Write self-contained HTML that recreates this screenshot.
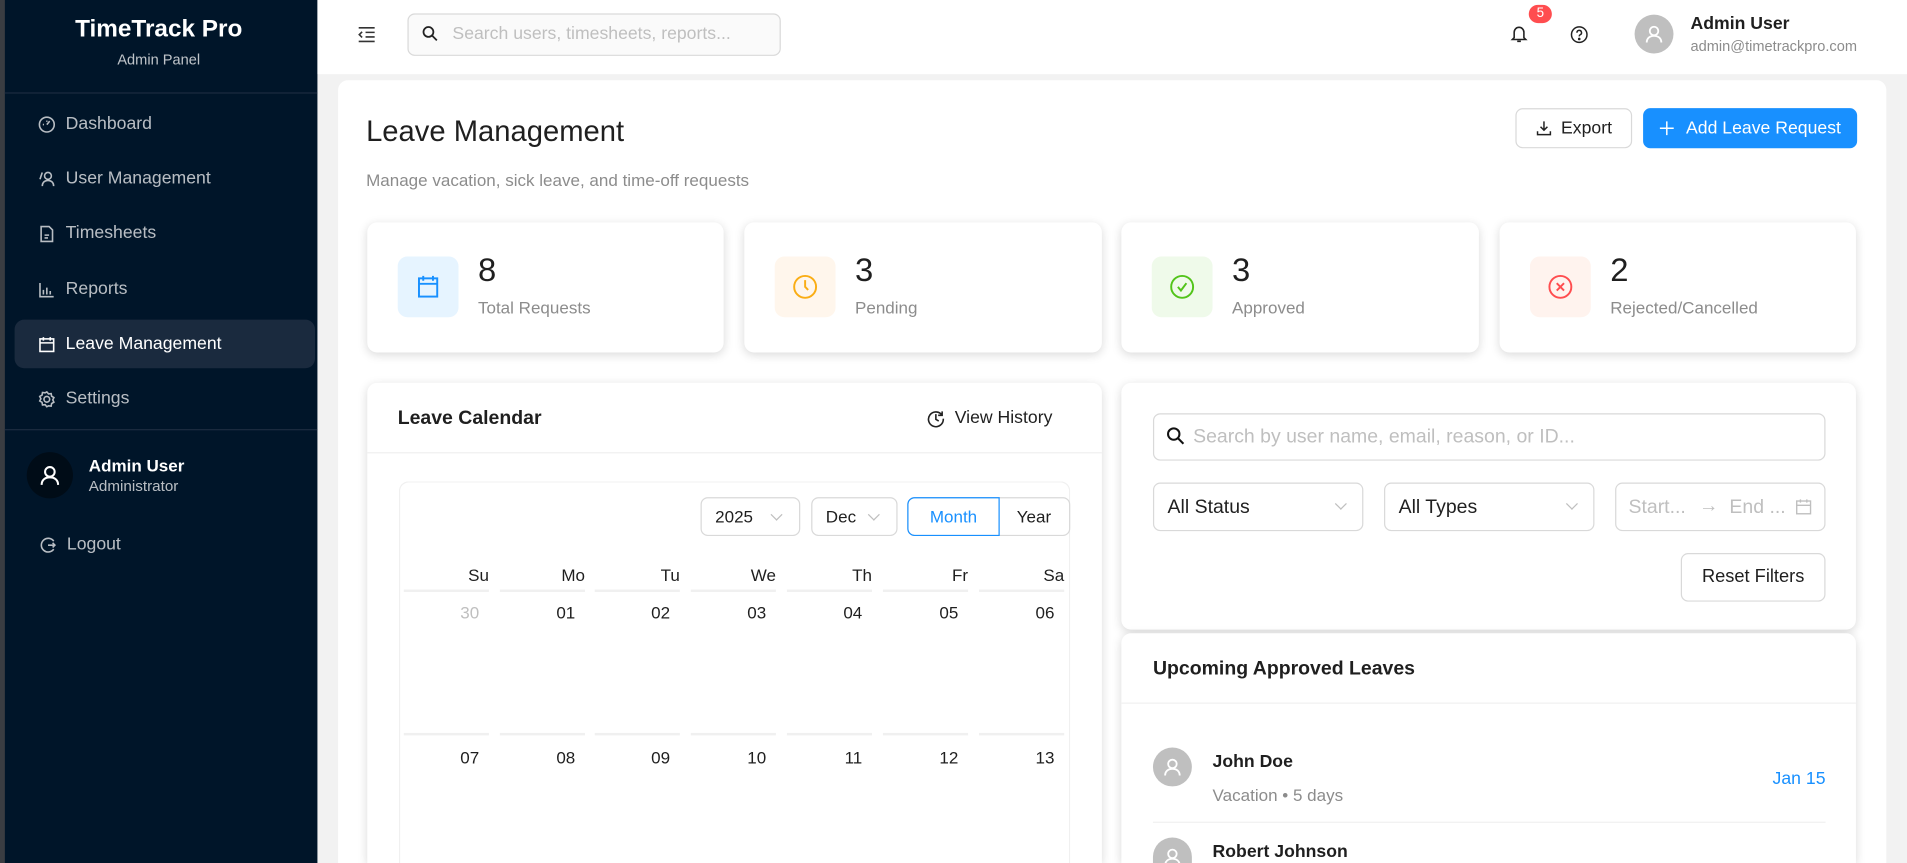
<!DOCTYPE html>
<html><head><meta charset="utf-8"><style>
*{box-sizing:border-box;margin:0;padding:0}
html,body{width:1907px;height:863px;overflow:hidden;background:#f2f2f2;font-family:"Liberation Sans",sans-serif}
#clip{position:absolute;left:0;top:0;width:1907px;height:863px;overflow:hidden}
#w{position:absolute;left:0;top:0;width:1568px;height:710px;overflow:hidden;transform:scale(1.2162,1.2155);transform-origin:0 0;background:#f2f2f2;color:#1f1f1f}
.a{position:absolute}
.sb{left:0;top:0;width:261px;height:710px;background:#001529;border-left:4px solid #3a3d42}
.sb .t{color:#fff}
.mi{position:absolute;left:27px;color:rgba(255,255,255,.72);font-size:14.5px;display:flex;align-items:center;gap:8px}
.mi svg{width:15px;height:15px;stroke:currentColor;fill:none;stroke-width:1.4}
.card{position:absolute;background:#fff;border-radius:8px;box-shadow:0 2px 8px rgba(0,0,0,.15)}
.cardb{position:absolute;background:#fff;border-radius:8px 8px 0 0;box-shadow:0 2px 8px rgba(0,0,0,.15)}
.box{position:absolute;border:1px solid #d9d9d9;border-radius:6px;background:#fff}
.ib{position:absolute;left:25px;top:28px;width:50px;height:50px;border-radius:8px;display:flex;align-items:center;justify-content:center}
.num{position:absolute;left:91px;top:24px;font-size:27px;color:#1f1f1f}
.lab{position:absolute;left:91px;top:62px;font-size:14px;color:#8c8c8c}
.wd,.dt{position:absolute;width:70px;text-align:right;font-size:14px}
.ln{position:absolute;width:70px;height:2px;background:#f0f0f0}
.chev{position:absolute;width:7px;height:7px;border-right:1px solid #bfbfbf;border-bottom:1px solid #bfbfbf;transform:rotate(45deg)}
</style></head><body><div id="clip"><div id="w">
<div class="a sb">
 <div class="a t" style="left:-4px;width:261px;top:13px;text-align:center;font-size:20px;font-weight:bold">TimeTrack Pro</div>
 <div class="a" style="left:-4px;width:261px;top:42px;text-align:center;font-size:12px;color:rgba(255,255,255,.75)">Admin Panel</div>
 <div class="a" style="left:0;width:257px;top:76px;height:1px;background:#1c2c40"></div>
 <div class="a" style="left:8px;top:263px;width:247px;height:40px;border-radius:8px;background:#1a2a3e"></div>
 <div class="mi" style="top:94px"><svg viewBox="0 0 16 16"><circle cx="8" cy="8" r="6.5"/><path d="M8 8l2.5-3M4.5 8h1M8 4.5v1"/></svg>Dashboard</div>
 <div class="mi" style="top:139px"><svg viewBox="0 0 16 16"><circle cx="9" cy="5" r="3"/><path d="M4 14c0-3 2-5 5-5s5 2 5 5M4 2L2 8"/></svg>User Management</div>
 <div class="mi" style="top:184px"><svg viewBox="0 0 16 16"><path d="M3 1.5h7l3 3v10H3z M6 9h4M6 11.5h3"/></svg>Timesheets</div>
 <div class="mi" style="top:230px"><svg viewBox="0 0 16 16"><path d="M2 2v12h12M5 12V8M8 12V6M11 12V9"/></svg>Reports</div>
 <div class="mi" style="top:275px;color:#fff"><svg viewBox="0 0 16 16"><rect x="2" y="3" width="12" height="11"/><path d="M2 6.5h12M5 1.5v3M11 1.5v3"/></svg>Leave Management</div>
 <div class="mi" style="top:320px"><svg viewBox="0 0 16 16"><circle cx="8" cy="8" r="2.5"/><path d="M8 1.5l1.5 1.8 2.3-.3.4 2.3 2 1.2-1 2 1 2-2 1.2-.4 2.3-2.3-.3L8 14.5l-1.5-1.8-2.3.3-.4-2.3-2-1.2 1-2-1-2 2-1.2.4-2.3 2.3.3z"/></svg>Settings</div>
 <div class="a" style="left:0;width:257px;top:353px;height:1px;background:#1c2c40"></div>
 <div class="a" style="left:18px;top:372px;width:38px;height:38px;border-radius:50%;background:#000c17;display:flex;align-items:center;justify-content:center"><svg width="18" height="18" viewBox="0 0 16 16" fill="none" stroke="#fff" stroke-width="1.5"><circle cx="8" cy="5.5" r="3.5"/><path d="M2 15c0-3.5 2.5-5.5 6-5.5s6 2 6 5.5"/></svg></div>
 <div class="a t" style="left:69px;top:375px;font-size:14px;font-weight:bold">Admin User</div>
 <div class="a" style="left:69px;top:393px;font-size:12.5px;color:rgba(255,255,255,.72)">Administrator</div>
 <div class="mi" style="top:440px;left:28px"><svg viewBox="0 0 16 16"><path d="M13 4.5A6 6 0 1 0 13 11.5M8 8h6M12 6l2 2-2 2"/></svg>Logout</div>
</div>
<div class="a" style="left:261px;top:0;width:1307px;height:61px;background:#fff"></div>
<svg class="a" style="left:294px;top:21px" width="15" height="15" viewBox="0 0 16 16" fill="none" stroke="#333" stroke-width="1.4"><path d="M1 2h14M7 6h8M7 10h8M1 14h14M4 5.5L1.5 8 4 10.5"/></svg>
<div class="box" style="left:335px;top:11px;width:307px;height:35px;background:#fafafa"></div>
<svg class="a" style="left:347px;top:21px" width="13" height="13" viewBox="0 0 16 16" fill="none" stroke="#222" stroke-width="1.8"><circle cx="6.5" cy="6.5" r="5"/><path d="M10 10l5 5"/></svg>
<div class="a" style="left:372px;top:20px;font-size:14.5px;color:#bfbfbf">Search users, timesheets, reports...</div>
<svg class="a" style="left:1242px;top:20px" width="14" height="16" viewBox="0 0 14 16" fill="none" stroke="#222" stroke-width="1.3"><path d="M3 11V6.5a4 4 0 0 1 8 0V11l1.5 1.5h-11zM5.5 14h3"/></svg>
<div class="a" style="left:1257px;top:4px;width:19px;height:15px;border-radius:8px;background:#ff4d4f;color:#fff;font-size:11px;text-align:center;line-height:15px">5</div>
<svg class="a" style="left:1291px;top:21px" width="15" height="15" viewBox="0 0 16 16" fill="none" stroke="#222" stroke-width="1.3"><circle cx="8" cy="8" r="6.8"/><path d="M6 6.3a2 2 0 1 1 2.8 1.8c-.6.3-.8.7-.8 1.4"/><circle cx="8" cy="11.8" r=".5" fill="#222"/></svg>
<div class="a" style="left:1344px;top:12px;width:32px;height:32px;border-radius:50%;background:#bfbfbf;display:flex;align-items:center;justify-content:center"><svg width="16" height="16" viewBox="0 0 16 16" fill="none" stroke="#fff" stroke-width="1.5"><circle cx="8" cy="5.5" r="3.5"/><path d="M2 15c0-3.5 2.5-5.5 6-5.5s6 2 6 5.5"/></svg></div>
<div class="a" style="left:1390px;top:12px;font-size:14.5px;font-weight:bold;color:#1f1f1f">Admin User</div>
<div class="a" style="left:1390px;top:31px;font-size:12px;color:#8c8c8c">admin@timetrackpro.com</div>

<div class="a" style="left:278px;top:66px;width:1273px;height:644px;background:#fff;border-radius:8px 8px 0 0"></div>
<div class="a" style="left:301px;top:95px;font-size:24px;color:#1f1f1f">Leave Management</div>
<div class="a" style="left:301px;top:140px;font-size:14px;color:#8c8c8c">Manage vacation, sick leave, and time-off requests</div>
<div class="box" style="left:1246px;top:89px;width:96px;height:33px;font-size:14.5px;display:flex;align-items:center;justify-content:center;gap:8px"><svg width="13" height="13" viewBox="0 0 16 16" fill="none" stroke="#222" stroke-width="1.5"><path d="M8 1v9M4.5 6.5L8 10l3.5-3.5M1.5 11v3.5h13V11"/></svg>Export</div>
<div class="a" style="left:1351px;top:89px;width:176px;height:33px;border-radius:6px;background:#1890ff;color:#fff;font-size:14.5px;display:flex;align-items:center;justify-content:center;gap:9px"><svg width="13" height="13" viewBox="0 0 16 16" stroke="#fff" stroke-width="1.5"><path d="M8 1v14M1 8h14"/></svg>Add Leave Request</div>

<div class="card" style="left:302px;top:183px;width:293px;height:107px"><div class="ib" style="background:#e6f4ff"><svg width="18" height="20" viewBox="0 0 18 20" fill="none" stroke="#1890ff" stroke-width="1.6"><rect x="1.5" y="3" width="15" height="15"/><path d="M1.5 7.5h15M5 1v4M13 1v4"/></svg></div><div class="num">8</div><div class="lab">Total Requests</div></div>
<div class="card" style="left:612px;top:183px;width:294px;height:107px"><div class="ib" style="background:#fff6ec"><svg width="22" height="22" viewBox="0 0 22 22" fill="none" stroke="#faad14" stroke-width="1.6"><circle cx="11" cy="11" r="9"/><path d="M11 5.5V11l2.5 2.5"/></svg></div><div class="num">3</div><div class="lab">Pending</div></div>
<div class="card" style="left:922px;top:183px;width:294px;height:107px"><div class="ib" style="background:#effaea"><svg width="22" height="22" viewBox="0 0 22 22" fill="none" stroke="#52c41a" stroke-width="1.6"><circle cx="11" cy="11" r="9"/><path d="M7.5 11l2.5 3 4.5-6"/></svg></div><div class="num">3</div><div class="lab">Approved</div></div>
<div class="card" style="left:1233px;top:183px;width:293px;height:107px"><div class="ib" style="background:#fff3ee"><svg width="22" height="22" viewBox="0 0 22 22" fill="none" stroke="#ff4d4f" stroke-width="1.6"><circle cx="11" cy="11" r="9"/><path d="M8 8l6 6M14 8l-6 6"/></svg></div><div class="num">2</div><div class="lab">Rejected/Cancelled</div></div>

<div class="cardb" style="left:302px;top:315px;width:604px;height:395px">
 <div class="a" style="left:25px;top:21px;font-size:16px;font-weight:bold">Leave Calendar</div>
 <div class="a" style="left:460px;top:21px;font-size:14.5px;display:flex;align-items:center;gap:8px"><svg width="15" height="15" viewBox="0 0 16 16" fill="none" stroke="#222" stroke-width="1.4"><path d="M13.5 5A6.5 6.5 0 1 0 14.5 8M8 4v4.5l2.5 1.5M13.5 1.5V5H10"/></svg>View History</div>
 <div class="a" style="left:0;top:57px;width:604px;height:1px;background:#f0f0f0"></div>
 <div class="a" style="left:26px;top:81px;width:552px;height:314px;border:1px solid #f0f0f0;border-bottom:none;border-radius:8px 8px 0 0"></div>
</div>
<div class="box" style="left:576px;top:409px;width:82px;height:32px"><span class="a" style="left:11px;top:7px;font-size:14px">2025</span><span class="chev" style="left:58px;top:10px"></span></div>
<div class="box" style="left:667px;top:409px;width:71px;height:32px"><span class="a" style="left:11px;top:7px;font-size:14px">Dec</span><span class="chev" style="left:47px;top:10px"></span></div>
<div class="box" style="left:746px;top:409px;width:134px;height:32px"><span class="a" style="left:89px;top:7px;font-size:14px">Year</span></div>
<div class="a" style="left:746px;top:409px;width:76px;height:32px;border:1px solid #1890ff;border-radius:6px 0 0 6px;color:#1890ff;font-size:14px;text-align:center;line-height:30px">Month</div>
<div class="a" style="left:332px;top:0">
 <div class="wd" style="left:0;top:465px">Su</div><div class="wd" style="left:79px;top:465px">Mo</div><div class="wd" style="left:157px;top:465px">Tu</div><div class="wd" style="left:236px;top:465px">We</div><div class="wd" style="left:315px;top:465px">Th</div><div class="wd" style="left:394px;top:465px">Fr</div><div class="wd" style="left:473px;top:465px">Sa</div>
 <div class="ln" style="left:0;top:485px"></div><div class="ln" style="left:79px;top:485px"></div><div class="ln" style="left:157px;top:485px"></div><div class="ln" style="left:236px;top:485px"></div><div class="ln" style="left:315px;top:485px"></div><div class="ln" style="left:394px;top:485px"></div><div class="ln" style="left:473px;top:485px"></div>
 <div class="dt" style="left:-8px;top:496px;color:#bfbfbf">30</div><div class="dt" style="left:71px;top:496px">01</div><div class="dt" style="left:149px;top:496px">02</div><div class="dt" style="left:228px;top:496px">03</div><div class="dt" style="left:307px;top:496px">04</div><div class="dt" style="left:386px;top:496px">05</div><div class="dt" style="left:465px;top:496px">06</div>
 <div class="ln" style="left:0;top:603px"></div><div class="ln" style="left:79px;top:603px"></div><div class="ln" style="left:157px;top:603px"></div><div class="ln" style="left:236px;top:603px"></div><div class="ln" style="left:315px;top:603px"></div><div class="ln" style="left:394px;top:603px"></div><div class="ln" style="left:473px;top:603px"></div>
 <div class="dt" style="left:-8px;top:615px">07</div><div class="dt" style="left:71px;top:615px">08</div><div class="dt" style="left:149px;top:615px">09</div><div class="dt" style="left:228px;top:615px">10</div><div class="dt" style="left:307px;top:615px">11</div><div class="dt" style="left:386px;top:615px">12</div><div class="dt" style="left:465px;top:615px">13</div>
</div>

<div class="card" style="left:922px;top:315px;width:604px;height:203px"></div>
<div class="box" style="left:948px;top:340px;width:553px;height:39px"></div>
<svg class="a" style="left:959px;top:351px" width="15" height="15" viewBox="0 0 16 16" fill="none" stroke="#111" stroke-width="1.8"><circle cx="6.5" cy="6.5" r="5"/><path d="M10 10l5 5"/></svg>
<div class="a" style="left:981px;top:351px;font-size:16px;color:#bfbfbf">Search by user name, email, reason, or ID...</div>
<div class="box" style="left:948px;top:397px;width:173px;height:40px"><span class="a" style="left:11px;top:11px;font-size:16px">All Status</span><span class="chev" style="left:150px;top:13px"></span></div>
<div class="box" style="left:1138px;top:397px;width:173px;height:40px"><span class="a" style="left:11px;top:11px;font-size:16px">All Types</span><span class="chev" style="left:150px;top:13px"></span></div>
<div class="box" style="left:1328px;top:397px;width:173px;height:40px;color:#bfbfbf;font-size:16px"><span class="a" style="left:10px;top:11px">Start...</span><span class="a" style="left:68px;top:10px">→</span><span class="a" style="left:93px;top:11px">End ...</span><svg class="a" style="left:147px;top:12px" width="14" height="14" viewBox="0 0 16 16" fill="none" stroke="#bfbfbf" stroke-width="1.3"><rect x="1.5" y="2.5" width="13" height="12"/><path d="M1.5 6.5h13M5 1v3M11 1v3"/></svg></div>
<div class="box" style="left:1382px;top:455px;width:119px;height:40px;font-size:15px;text-align:center;line-height:38px">Reset Filters</div>

<div class="cardb" style="left:922px;top:521px;width:604px;height:189px;overflow:hidden">
 <div class="a" style="left:26px;top:21px;font-size:16px;font-weight:bold">Upcoming Approved Leaves</div>
 <div class="a" style="left:0;top:57px;width:604px;height:1px;background:#f0f0f0"></div>
 <div class="a" style="left:26px;top:94px;width:32px;height:32px;border-radius:50%;background:#bfbfbf;display:flex;align-items:center;justify-content:center"><svg width="16" height="16" viewBox="0 0 16 16" fill="none" stroke="#fff" stroke-width="1.5"><circle cx="8" cy="5.5" r="3.5"/><path d="M2 15c0-3.5 2.5-5.5 6-5.5s6 2 6 5.5"/></svg></div>
 <div class="a" style="left:75px;top:98px;font-size:14.5px;font-weight:bold">John Doe</div>
 <div class="a" style="left:75px;top:125px;font-size:14px;color:#8c8c8c">Vacation • 5 days</div>
 <div class="a" style="right:25px;top:112px;font-size:14.5px;color:#1890ff">Jan 15</div>
 <div class="a" style="left:26px;top:155px;width:553px;height:1px;background:#f0f0f0"></div>
 <div class="a" style="left:26px;top:168px;width:32px;height:21px;border-radius:16px 16px 0 0;background:#bfbfbf;overflow:hidden"><svg style="position:absolute;left:8px;top:8px" width="16" height="16" viewBox="0 0 16 16" fill="none" stroke="#fff" stroke-width="1.5"><circle cx="8" cy="5.5" r="3.5"/><path d="M2 15c0-3.5 2.5-5.5 6-5.5s6 2 6 5.5"/></svg></div>
 <div class="a" style="left:75px;top:172px;font-size:14.5px;font-weight:bold;line-height:17px">Robert Johnson</div>
</div>
</div></div></body></html>
